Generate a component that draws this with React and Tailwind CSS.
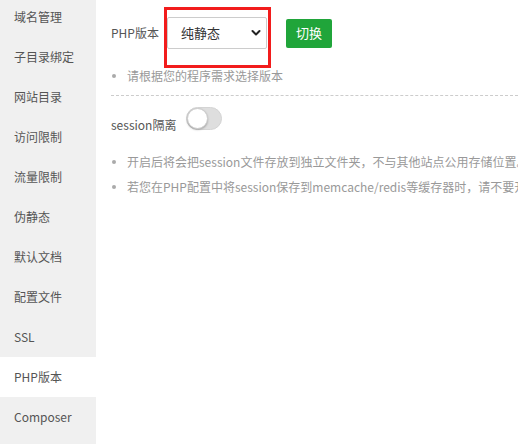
import React from "react";

const items = [
  "域名管理",
  "子目录绑定",
  "网站目录",
  "访问限制",
  "流量限制",
  "伪静态",
  "默认文档",
  "配置文件",
  "SSL",
  "PHP版本",
  "Composer",
];

function Bullet({ children }) {
  return (
    <li className="flex items-center whitespace-nowrap">
      <span className="w-[16px] shrink-0 flex items-center">
        <span className="block w-[4px] h-[4px] rounded-full bg-[#aaa] ml-[1px]" />
      </span>
      <span>{children}</span>
    </li>
  );
}

export default function App() {
  return (
    <div
      className="relative w-[518px] h-[444px] overflow-hidden bg-white flex text-[12px] text-[#555]"
      style={{ fontFamily: '"Noto Sans CJK SC", "Noto Sans", sans-serif' }}
    >
      <div className="w-[96px] shrink-0 bg-[#f0f0f0] h-full">
        <div className="mt-[-3px]">
          {items.map((t) => (
            <div
              key={t}
              className={
                "h-[40px] flex items-center pl-[14px] text-[12px] text-[#555] " +
                (t === "PHP版本" ? "bg-white" : "")
              }
            >
              {t}
            </div>
          ))}
        </div>
      </div>

      <div className="flex-1 min-w-0 pl-[15px] pt-[17px] overflow-hidden">
        <div className="flex items-center h-[32px]">
          <span className="w-[56px] shrink-0 text-[#555]">PHP版本</span>
          <div className="w-[100px] h-[32px] border border-[#ccc] rounded-[2px] flex items-center justify-between pl-[13px] pr-[5px] text-[13px] text-[#333]">
            <span>纯静态</span>
            <svg width="10" height="8" viewBox="0 0 10 8">
              <polyline
                points="1.5,2 5,5.5 8.5,2"
                fill="none"
                stroke="#222"
                strokeWidth="2"
                strokeLinecap="round"
                strokeLinejoin="round"
              />
            </svg>
          </div>
          <button className="ml-[19px] w-[46px] h-[29px] bg-[#20a53a] text-white text-[13px] rounded-[2px] flex items-center justify-center">
            切换
          </button>
        </div>

        <ul className="mt-[17px] leading-[20px] text-[#999]">
          <Bullet>请根据您的程序需求选择版本</Bullet>
        </ul>

        <div className="mt-[9px] border-t border-dashed border-[#ccc]" />

        <div className="mt-[11px] flex items-start">
          <span className="mt-[8px] leading-[20px] text-[#555]">session隔离</span>
          <div className="ml-[10px] w-[36px] h-[23px] rounded-full bg-[#dedede] border border-[#d4d4d4] relative">
            <div className="absolute left-[0px] top-[0px] w-[21px] h-[21px] rounded-full bg-white border border-[#ccc] shadow-[0_1px_2px_rgba(0,0,0,0.25)]" />
          </div>
        </div>

        <ul className="mt-[14px] leading-[25px] text-[#999]">
          <Bullet>开启后将会把session文件存放到独立文件夹，不与其他站点公用存储位置。</Bullet>
          <Bullet>若您在PHP配置中将session保存到memcache/redis等缓存器时，请不要开启此选项。</Bullet>
        </ul>
      </div>

      <div className="absolute left-[164px] top-[7px] w-[107px] h-[61px] border-[3px] border-[#f21c1c] pointer-events-none" />
    </div>
  );
}
